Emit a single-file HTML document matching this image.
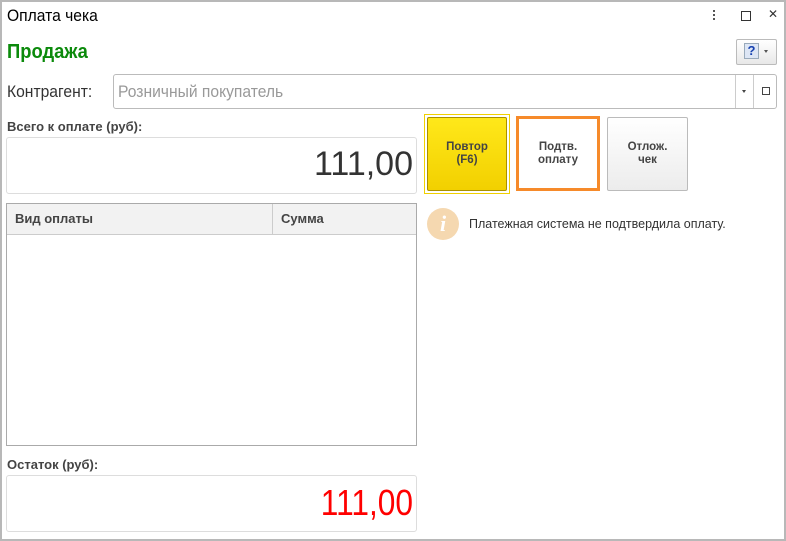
<!DOCTYPE html><html><head><meta charset="utf-8"><style>
body{margin:0;width:786px;height:541px;overflow:hidden;background:#fff;font-family:"Liberation Sans",sans-serif;position:relative}
.a{position:absolute}
#frame{left:0;top:0;width:782px;height:537px;border:2px solid #b8b8b8}
</style></head><body>
<div class="a" id="frame"></div>
<div class="a" style="left:7px;top:6px;font-size:17px;color:#000;transform:scaleX(.92);transform-origin:left">Оплата чека</div>
<div class="a" style="left:713px;top:10px;width:2px;height:2px;background:#555;box-shadow:0 4px #555,0 8px #555"></div>
<div class="a" style="left:741px;top:11px;width:8px;height:8px;border:1px solid #333"></div>
<div class="a" style="left:768px;top:7px;font-size:12px;color:#333">✕</div>
<div class="a" style="left:7px;top:41px;font-size:20px;font-weight:bold;color:#0b8a0b;transform:scaleX(.92);transform-origin:left">Продажа</div>
<div class="a" style="left:736px;top:39px;width:39px;height:24px;border:1px solid #bbb;border-radius:2px;background:linear-gradient(#fff,#e8e8e8)"></div>
<div class="a" style="left:744px;top:43px;width:13px;height:14px;background:#dde6f5;border:1px solid #9ab;color:#1540b0;font-weight:bold;font-size:13px;line-height:14px;text-align:center">?</div>
<div class="a" style="left:764px;top:50px;border:2px solid transparent;border-top:3px solid #555"></div>
<div class="a" style="left:7px;top:82px;font-size:17px;color:#333;transform:scaleX(.92);transform-origin:left">Контрагент:</div>
<div class="a" style="left:113px;top:74px;width:662px;height:33px;border:1px solid #bbb;border-radius:3px"></div>
<div class="a" style="left:735px;top:75px;width:1px;height:33px;background:#ccc"></div>
<div class="a" style="left:753px;top:75px;width:1px;height:33px;background:#ccc"></div>
<div class="a" style="left:742px;top:90px;border:2px solid transparent;border-top:3px solid #444"></div>
<div class="a" style="left:762px;top:87px;width:6px;height:6px;border:1px solid #444"></div>
<div class="a" style="left:118px;top:82px;font-size:17px;color:#999;transform:scaleX(.92);transform-origin:left">Розничный покупатель</div>
<div class="a" style="left:7px;top:119px;font-size:13px;font-weight:bold;color:#444">Всего к оплате (руб):</div>
<div class="a" style="left:6px;top:137px;width:409px;height:55px;border:1px solid #ddd;border-radius:3px"></div>
<div class="a" style="left:200px;top:145px;width:213px;text-align:right;font-size:34px;color:#333">111,00</div>
<div class="a" style="left:6px;top:203px;width:409px;height:241px;border:1px solid #aaa"></div>
<div class="a" style="left:7px;top:204px;width:409px;height:30px;background:#f2f2f2;border-bottom:1px solid #ccc"></div>
<div class="a" style="left:272px;top:204px;width:1px;height:30px;background:#ccc"></div>
<div class="a" style="left:15px;top:211px;font-size:13px;font-weight:bold;color:#444">Вид оплаты</div>
<div class="a" style="left:281px;top:211px;font-size:13px;font-weight:bold;color:#444">Сумма</div>
<div class="a" style="left:7px;top:457px;font-size:13px;font-weight:bold;color:#444">Остаток (руб):</div>
<div class="a" style="left:6px;top:475px;width:409px;height:55px;border:1px solid #ddd;border-radius:3px"></div>
<div class="a" style="left:200px;top:482px;width:213px;text-align:right;font-size:36px;color:#f00;transform:scaleX(.88);transform-origin:right">111,00</div>
<div class="a" style="left:424px;top:114px;width:84px;height:78px;border:1px solid #f0d000"></div>
<div class="a" style="left:427px;top:117px;width:78px;height:72px;border:1px solid #a89000;border-radius:2px;background:linear-gradient(#ffe81a,#f2d000);font-size:11.5px;font-weight:bold;color:#444;text-align:center;display:flex;align-items:center;justify-content:center;line-height:13px">Повтор<br>(F6)</div>
<div class="a" style="left:516px;top:116px;width:78px;height:69px;border:3px solid #f68a2a;background:#fff;font-size:11.5px;font-weight:bold;color:#444;text-align:center;display:flex;align-items:center;justify-content:center;line-height:13px">Подтв.<br>оплату</div>
<div class="a" style="left:607px;top:117px;width:79px;height:72px;border:1px solid #bbb;border-radius:2px;background:linear-gradient(#fff,#ececec);font-size:11.5px;font-weight:bold;color:#444;text-align:center;display:flex;align-items:center;justify-content:center;line-height:13px">Отлож.<br>чек</div>
<div class="a" style="left:427px;top:208px;width:32px;height:32px;border-radius:50%;background:#f5d8b0;color:#fff;font:italic bold 22px 'Liberation Serif',serif;text-align:center;line-height:32px">i</div>
<div class="a" style="left:469px;top:217px;font-size:12.5px;color:#333">Платежная система не подтвердила оплату.</div>
</body></html>
